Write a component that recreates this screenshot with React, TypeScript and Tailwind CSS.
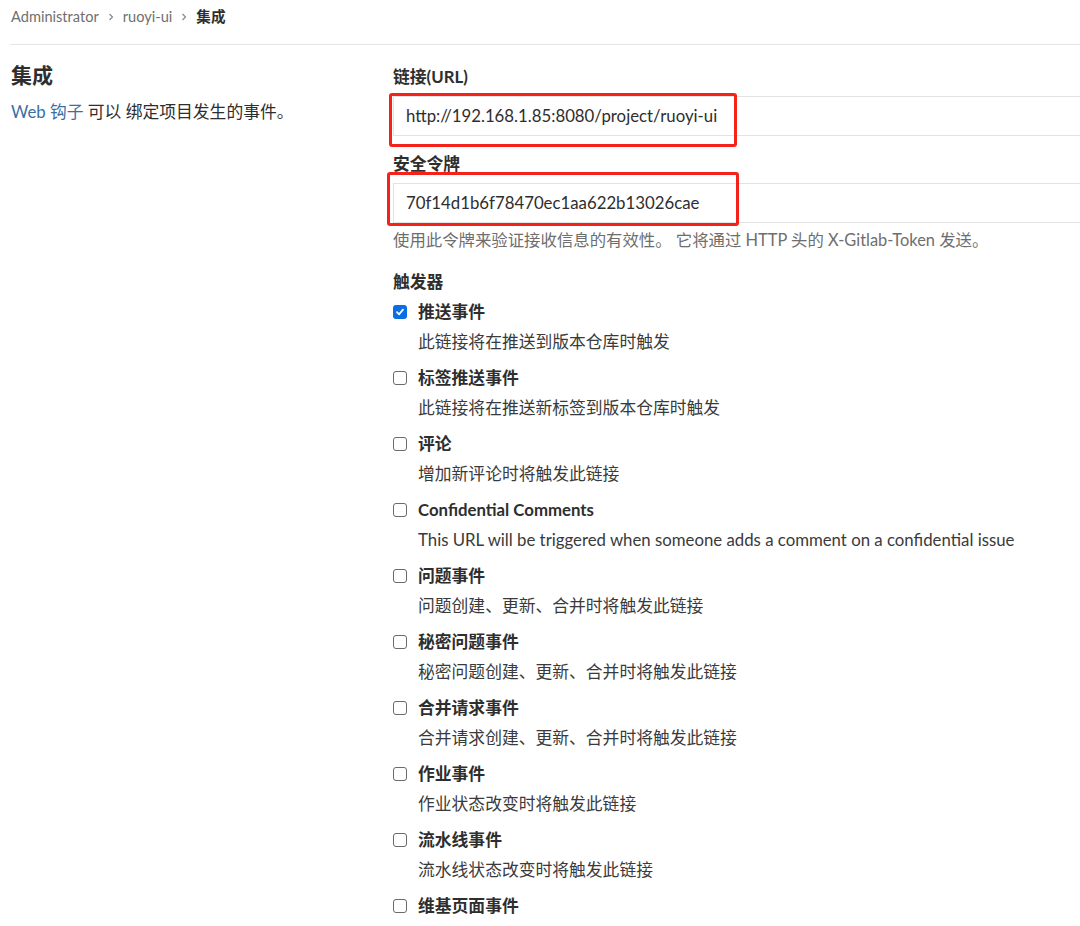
const FONT = { fontFamily: 'Lato, "Noto Sans CJK SC", sans-serif' };

type Trigger = { label: string; desc?: string; checked?: boolean };

const TRIGGERS: Trigger[] = [
  { label: "推送事件", desc: "此链接将在推送到版本仓库时触发", checked: true },
  { label: "标签推送事件", desc: "此链接将在推送新标签到版本仓库时触发" },
  { label: "评论", desc: "增加新评论时将触发此链接" },
  { label: "Confidential Comments", desc: "This URL will be triggered when someone adds a comment on a confidential issue" },
  { label: "问题事件", desc: "问题创建、更新、合并时将触发此链接" },
  { label: "秘密问题事件", desc: "秘密问题创建、更新、合并时将触发此链接" },
  { label: "合并请求事件", desc: "合并请求创建、更新、合并时将触发此链接" },
  { label: "作业事件", desc: "作业状态改变时将触发此链接" },
  { label: "流水线事件", desc: "流水线状态改变时将触发此链接" },
  { label: "维基页面事件" },
];

function Chevron() {
  return (
    <svg width="8" height="10" viewBox="0 0 8 10" className="mx-[8px]">
      <path d="M2.5 2 L5.5 5 L2.5 8" fill="none" stroke="#8a8a8a" strokeWidth="1.2" />
    </svg>
  );
}

function Checkbox({ checked }: { checked?: boolean }) {
  if (checked) {
    return (
      <span className="flex h-[14px] w-[14px] items-center justify-center rounded-[3px] bg-[#0b6fe4]">
        <svg width="10" height="10" viewBox="0 0 10 10">
          <path d="M2 5.2 L4.1 7.3 L8 2.6" fill="none" stroke="#fff" strokeWidth="1.8" strokeLinecap="round" strokeLinejoin="round" />
        </svg>
      </span>
    );
  }
  return <span className="block h-[14px] w-[14px] rounded-[3px] border border-[#6b6b6b] bg-white" />;
}

function Field({ label, value, hint }: { label: string; value: string; hint?: string }) {
  return (
    <div>
      <div className="text-[16.8px] font-bold leading-[26px] text-[#2e2e2e]">{label}</div>
      <div className="mt-[6px] flex h-[40px] w-[720px] items-center border border-[#e3e3e3] bg-white px-[12px] text-[16.8px] text-[#2e2e2e]">
        {value}
      </div>
      {hint ? <div className="mt-[5px] text-[16.4px] leading-[24px] text-[#6e6e6e]">{hint}</div> : null}
    </div>
  );
}

export default function App() {
  return (
    <div className="h-[926px] w-[1080px] overflow-hidden bg-white text-[#2e2e2e]" style={FONT}>
      <div className="pl-[10px]">
        <div className="flex h-[44px] items-center pb-[10px] pl-[1px] text-[14.6px] text-[#6f6f6f]">
          <span>Administrator</span>
          <Chevron />
          <span>ruoyi-ui</span>
          <Chevron />
          <span className="font-bold text-[#2e2e2e]">集成</span>
        </div>
        <div className="border-t border-[#e6e6e6]" />

        <div className="flex pt-[16px]">
          <div className="w-[383px] shrink-0 pl-[1px]">
            <div className="text-[21px] font-bold leading-[28px]">集成</div>
            <div className="mt-[10px] text-[16.8px] leading-[26px]">
              <span className="text-[#3a6ea5]">Web 钩子</span> 可以 绑定项目发生的事件。
            </div>
          </div>

          <div className="relative flex-1">
            <div className="mt-[3px]">
              <Field label="链接(URL)" value="http://192.168.1.85:8080/project/ruoyi-ui" />
            </div>
            <div className="mt-[15px]">
              <Field
                label="安全令牌"
                value="70f14d1b6f78470ec1aa622b13026cae"
                hint="使用此令牌来验证接收信息的有效性。 它将通过 HTTP 头的 X-Gitlab-Token 发送。"
              />
            </div>

            <div className="mt-[17px] text-[16.8px] font-bold leading-[26px]">触发器</div>

            <div className="mt-[2px]">
              {TRIGGERS.map((t) => (
                <div key={t.label} className="mb-[6px]">
                  <div className="flex h-[30px] items-center">
                    <Checkbox checked={t.checked} />
                    <span className="ml-[11px] text-[16.8px] font-bold">{t.label}</span>
                  </div>
                  {t.desc ? (
                    <div className="ml-[25px] h-[30px] text-[16.8px] leading-[30px] text-[#3a3a3a]">{t.desc}</div>
                  ) : null}
                </div>
              ))}
            </div>

            {/* red annotation boxes */}
            <div className="absolute left-[-4px] top-[32px] h-[54px] w-[348px] rounded-[3px] border-[3px] border-[#f5221c]" />
            <div className="absolute left-[-6px] top-[111px] h-[54px] w-[352px] rounded-[3px] border-[3px] border-[#f5221c]" />
          </div>
        </div>
      </div>
    </div>
  );
}
